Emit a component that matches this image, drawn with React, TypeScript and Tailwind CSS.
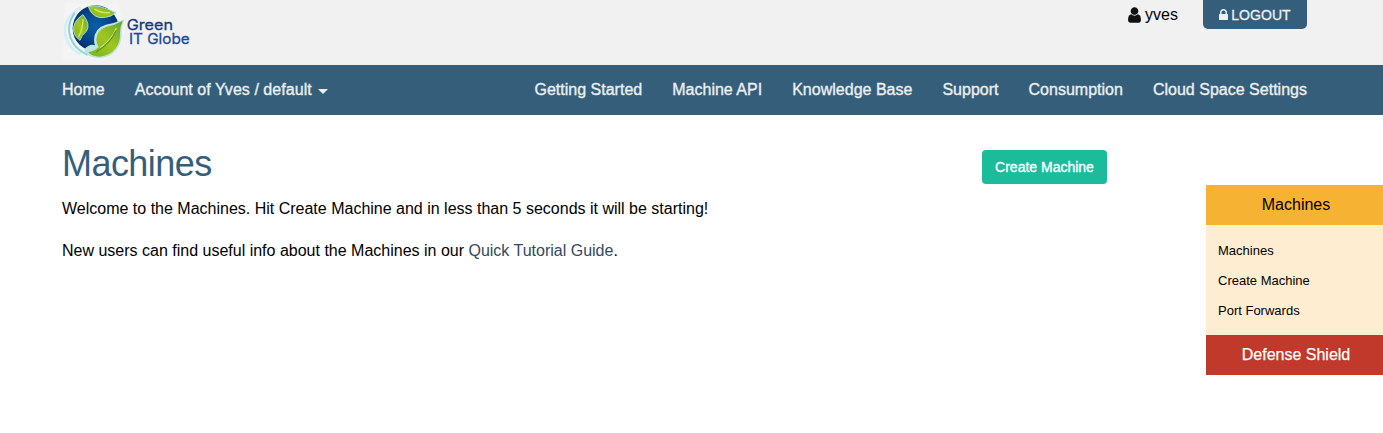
import React from "react";

const mainLinks = ["Getting Started", "Machine API", "Knowledge Base", "Support", "Consumption", "Cloud Space Settings"];
const machineLinks = ["Machines", "Create Machine", "Port Forwards"];

function Logo() {
  return (
    <svg width="145" height="65" viewBox="0 0 435 195" className="block" aria-label="Green IT Globe">
      <defs>
        <radialGradient id="globe" cx="0.5" cy="0.45" r="0.55">
          <stop offset="0" stopColor="#0b5fa6" />
          <stop offset="0.55" stopColor="#06488e" />
          <stop offset="1" stopColor="#062c68" />
        </radialGradient>
        <linearGradient id="leaf" x1="0" y1="1" x2="1" y2="0">
          <stop offset="0" stopColor="#7fb11c" />
          <stop offset="0.5" stopColor="#a0c71f" />
          <stop offset="1" stopColor="#64a22c" />
        </linearGradient>
        <filter id="soft" x="-10%" y="-10%" width="120%" height="120%">
          <feGaussianBlur stdDeviation="2" />
        </filter>
      </defs>
      <path d="M30 10H190Q207 60 207 100Q200 150 150 180H24Z" fill="#f3f4f4" filter="url(#soft)" />
      <g fill="none" strokeLinecap="round" filter="url(#soft)">
        <path d="M74 24Q30 50 30 92Q32 138 74 162" stroke="#d5edf3" strokeWidth="7" />
        <path d="M58 40Q34 74 46 112Q58 146 96 164" stroke="#8fd3df" strokeWidth="6" />
      </g>
      <circle cx="122" cy="85" r="69" fill="url(#globe)" />
      <path d="M208 58Q178 70 152 74Q118 84 117 120Q117 128 120 136Q104 130 88 148Q92 172 132 175Q166 174 186 148Q202 124 200 98Q200 76 208 58Z" fill="#b9e4e0" />
      <g fill="url(#leaf)" stroke="#a3dfe0" strokeWidth="3" strokeLinejoin="round">
        <path d="M84 44Q52 64 56 94Q58 110 75 121Q79 106 94 94Q108 74 84 44Z" />
        <path d="M100 20Q114 14 135 20Q152 24 182 38Q170 50 151 52Q133 56 119 47Q106 38 100 20Z" />
      </g>
      <path d="M203 63Q178 76 155 80Q125 90 124 119Q124 130 131 141Q118 154 100 157Q112 170 134 170Q164 168 182 145Q197 123 195 98Q195 80 203 63Z" fill="url(#leaf)" />
      <g fill="none" strokeLinecap="round">
        <path d="M84 58Q84 86 71 110M120 28Q140 40 164 38" stroke="#d5e85b" strokeWidth="4" />
        <path d="M183 86Q172 118 137 143" stroke="#dcec90" strokeWidth="4" />
        <path d="M182 93Q170 126 124 156" stroke="#5b982a" strokeWidth="4" />
      </g>
      <g fontFamily="Inter, sans-serif" fontSize="43">
        <text x="215" y="91" fill="#143a7c" stroke="#143a7c" strokeWidth="0.8" textLength="139" lengthAdjust="spacingAndGlyphs">Green</text>
        <text x="222" y="133" fill="#1a48a0" stroke="#1a48a0" strokeWidth="0.8" textLength="182" lengthAdjust="spacingAndGlyphs">IT Globe</text>
      </g>
    </svg>
  );
}

function UserIcon() {
  return (
    <svg viewBox="0 0 1280 1792" className="h-[18px] w-[13px] fill-[#111]" aria-hidden="true">
      <path d="M1280 1399q0 109-62.5 187t-150.5 78h-854q-88 0-150.5-78t-62.5-187q0-85 8.5-160.5t31.5-152 58.5-131 94-89 134.5-34.5q131 128 313 128t313-128q76 0 134.5 34.5t94 89 58.5 131 31.5 152 8.5 160.5zm-256-887q0 159-112.5 271.5t-271.5 112.5-271.5-112.5-112.5-271.5 112.5-271.5 271.5-112.5 271.5 112.5 112.5 271.5z" />
    </svg>
  );
}

function LockIcon() {
  return (
    <svg viewBox="0 0 1152 1792" className="h-[14px] w-[9px] fill-[#ecf0f1]" aria-hidden="true">
      <path d="M320 768h512v-192q0-106-75-181t-181-75-181 75-75 181v192zm832 96v576q0 40-28 68t-68 28h-960q-40 0-68-28t-28-68v-576q0-40 28-68t68-28h32v-192q0-184 132-316t316-132 316 132 132 316v192h32q40 0 68 28t28 68z" />
    </svg>
  );
}

export default function App() {
  return (
    <div className="h-[433px] overflow-hidden bg-white font-['Liberation_Sans',Arial,sans-serif] text-base text-black">
      <header className="flex h-[65px] items-start justify-between bg-[#f1f1f1] pr-[76px] pl-[55px]">
        <Logo />
        <div className="flex">
          <div className="mr-[25px] flex h-[29px] items-center gap-1">
            <UserIcon />
            <span>yves</span>
          </div>
          <button className="flex h-[29px] w-[104px] items-center justify-center gap-[3px] rounded-b-[5px] bg-[#355e7a] text-sm tracking-[0.05px] text-[#ecf0f1] [-webkit-text-stroke:0.3px]">
            <LockIcon />
            LOGOUT
          </button>
        </div>
      </header>
      <nav className="flex h-[50px] items-center justify-between bg-[#355e7a] pr-[76px] pl-[62px] whitespace-nowrap text-[#ecf0f1] [-webkit-text-stroke:0.35px]">
        <div className="flex gap-[30px]">
          <a href="#">Home</a>
          <a href="#" className="flex items-center">
            <span className="tracking-[0.05px]">Account of Yves / default</span>
            <svg viewBox="0 0 10 5" className="mt-[3px] ml-[6px] h-[5px] w-[10px] fill-[#ecf0f1]"><path d="M0 0h10L5 5z" /></svg>
          </a>
        </div>
        <div className="flex gap-[30px]">
          {mainLinks.map((label) => <a href="#" key={label} className="tracking-[0.01px]">{label}</a>)}
        </div>
      </nav>
      <main className="flex justify-between pl-[62px]">
        <section className="pt-[29px]">
          <h1 className="text-[36px] leading-10 tracking-[-0.55px] text-[#355e7a]">Machines</h1>
          <p className="mt-[14px] leading-[21px]">Welcome to the Machines. Hit Create Machine and in less than 5 seconds it will be starting!</p>
          <p className="mt-[21px] leading-[21px]">
            New users can find useful info about the Machines in our <a href="#" className="text-[#34495e]">Quick Tutorial Guide</a>.
          </p>
        </section>
        <div className="flex">
          <button className="mt-[35px] mr-[99px] h-[34px] w-[125px] rounded bg-[#1abc9c] text-sm text-white [-webkit-text-stroke:0.35px]">Create Machine</button>
          <aside className="mt-[70px] w-[177px]">
            <h2 className="h-10 bg-[#f6b232] pl-[3px] text-center leading-10">Machines</h2>
            <ul className="h-[110px] bg-[#feedd0] pt-[11px] pl-3 text-[13px] leading-[30px]">
              {machineLinks.map((label) => <li key={label}><a href="#">{label}</a></li>)}
            </ul>
            <h2 className="h-10 bg-[#c0392b] pl-[3px] text-center leading-10 text-white [-webkit-text-stroke:0.25px]">Defense Shield</h2>
          </aside>
        </div>
      </main>
    </div>
  );
}
